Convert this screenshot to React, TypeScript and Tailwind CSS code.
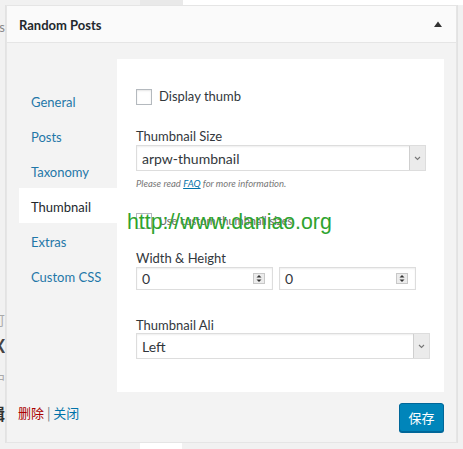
import React from 'react';

const ui = "font-['Lato','Noto_Sans_CJK_SC',sans-serif]";
const cjk = "font-['Noto_Sans_CJK_SC',sans-serif]";

const tabs = ['General', 'Posts', 'Taxonomy', 'Thumbnail', 'Extras', 'Custom CSS'];

const Chevron = () => (
  <svg width="7" height="5" viewBox="0 0 7 5">
    <path d="M1 1 L3.5 3.5 L6 1" fill="none" stroke="#777" strokeWidth="1.1" />
  </svg>
);

const Spinner = () => (
  <svg width="12" height="11" viewBox="0 0 12 11">
    <rect x="0.5" y="0.5" width="11" height="10" fill="#ececec" stroke="#c8c8c8" />
    <path d="M3.5 4.5 L6 2 L8.5 4.5 Z" fill="#333" />
    <path d="M3.5 6.5 L6 9 L8.5 6.5 Z" fill="#333" />
  </svg>
);

const SelectBox = ({ value, width }: { value: string; width: string }) => (
  <div className={`flex h-[26px] ${width} border border-[#dddddd] bg-white shadow-[inset_0_1px_2px_rgba(0,0,0,0.07)]`}>
    <div className="flex-1 flex items-center pl-[5px] text-[14px] text-[#32373c]">{value}</div>
    <div className="w-[16px] flex items-center justify-center bg-[#ebebeb] border-l border-[#cfcfcf]">
      <Chevron />
    </div>
  </div>
);

const NumberBox = () => (
  <div className="flex items-center h-[23px] w-[137px] border border-[#dddddd] bg-white pl-[5px] pr-[7px] shadow-[inset_0_1px_2px_rgba(0,0,0,0.07)]">
    <span className="flex-1 text-[14px] text-[#32373c]">0</span>
    <Spinner />
  </div>
);

const Fragment = ({ text, h, cls }: { text: string; h: string; cls: string }) => (
  <div className={`flex justify-end items-center overflow-hidden ${h} ${cls}`}>
    <span className="whitespace-nowrap">{text}</span>
  </div>
);

export default function App() {
  return (
    <div className={`w-[463px] h-[449px] overflow-hidden bg-[#f1f1f1] flex flex-col ${ui}`}>
      {/* top strip */}
      <div className="h-[5px] flex shrink-0">
        <div className="w-[140px] bg-[#f1f1f1]" />
        <div className="w-[43px] bg-[#e9e9e9]" />
        <div className="flex-1 bg-white" />
      </div>

      <div className="flex flex-1">
        {/* cut-off page behind */}
        <div className="w-[6px] shrink-0 flex flex-col border-r border-[#e2e2e2]">
          <Fragment text="ss" h="h-[44px]" cls="text-[13px] text-[#888] pt-[2px]" />
          <div className="h-[260px]" />
          <Fragment text="可" h="h-[22px]" cls={`text-[13px] text-[#aaa] ${cjk}`} />
          <Fragment text="X" h="h-[30px]" cls="text-[18px] font-bold text-[#444]" />
          <Fragment text="中" h="h-[34px]" cls={`text-[13px] text-[#aaa] ${cjk}`} />
          <Fragment text="辑" h="h-[36px]" cls={`text-[16px] font-bold text-[#333] ${cjk}`} />
        </div>

        {/* widget */}
        <div className="w-[451px] h-[438px] shrink-0 border border-[#e5e5e5] bg-[#f3f3f3] flex flex-col">
          <div className="h-[37px] shrink-0 flex items-center justify-between pl-[12px] pr-[14px] pt-[4px] bg-[#fafafa] border-b border-[#e5e5e5]">
            <span className="text-[13px] font-bold text-[#23282d]">Random Posts</span>
            <svg width="8" height="6" viewBox="0 0 8 6" className="-mt-[4px]">
              <path d="M0 6 L4 0.5 L8 6 Z" fill="#333" />
            </svg>
          </div>

          <div className="flex-1 flex flex-col pt-[16px] pr-[12px]">
            <div className="flex h-[333px]">
              {/* tabs */}
              <div className="w-[110px] shrink-0 pt-[24px] pl-[12px]">
                {tabs.map((t) => (
                  <div
                    key={t}
                    className={`h-[35px] flex items-center pl-[12px] pt-[5px] text-[13px] ${
                      t === 'Thumbnail' ? 'bg-white text-[#23282d]' : 'text-[#1f77a8]'
                    }`}
                  >
                    {t}
                  </div>
                ))}
              </div>

              {/* panel */}
              <div className="relative flex-1 bg-white pl-[19px] pt-[30px]">
                <div className="flex items-center h-[16px]">
                  <div className="w-[16px] h-[16px] border border-[#b4b9be] bg-white shadow-[inset_0_1px_2px_rgba(0,0,0,0.1)]" />
                  <span className="ml-[7px] text-[13px] text-[#32373c]">Display thumb</span>
                </div>

                <div className="mt-[22px] h-[18px] leading-[18px] text-[13px] text-[#32373c]">Thumbnail Size</div>
                <SelectBox value="arpw-thumbnail" width="w-[290px]" />
                <div className="mt-[6px] h-[13px] leading-[13px] text-[9.5px] italic text-[#777]">
                  Please read <span className="text-[#0073aa] underline">FAQ</span> for more information.
                </div>

                <div className="mt-[23px] flex items-center h-[16px]">
                  <div className="w-[16px] h-[16px] border border-[#b4b9be] bg-white" />
                  <span className="ml-[7px] text-[11px] text-[#666]">Use custom thumbnail sizes</span>
                </div>

                <div className="mt-[20px] h-[18px] leading-[18px] text-[13px] text-[#32373c]">Width &amp; Height</div>
                <div className="flex gap-[6px]">
                  <NumberBox />
                  <NumberBox />
                </div>

                <div className="mt-[27px] h-[16px] leading-[16px] text-[13px] text-[#32373c]">Thumbnail Ali</div>
                <SelectBox value="Left" width="w-[294px]" />

                {/* watermark over content */}
                <div className="absolute left-[10px] top-[151px] text-[21.3px] leading-[24px] text-[#2ea32e] font-['Liberation_Sans',Arial,sans-serif] whitespace-nowrap">
                  http://www.daniao.org
                </div>
              </div>
            </div>

            <div className="flex items-center justify-between pl-[11px] mt-[11px]">
              <div className={`text-[13px] ${cjk} -mt-[10px]`}>
                <span className="text-[#a00]">删除</span>
                <span className="text-[#72777c]"> | </span>
                <span className="text-[#0073aa]">关闭</span>
              </div>
              <button className={`h-[29px] w-[45px] rounded-[3px] bg-[#0085ba] border border-[#006799] text-white text-[13px] ${cjk} shadow-[0_1px_0_#006799]`}>
                保存
              </button>
            </div>
          </div>
        </div>

        <div className="flex-1 border-l border-[#e2e2e2]" />
      </div>

      <div className="h-[6px] flex shrink-0">
        <div className="w-[140px]" />
        <div className="w-[42px] bg-white" />
        <div className="flex-1" />
      </div>
    </div>
  );
}
